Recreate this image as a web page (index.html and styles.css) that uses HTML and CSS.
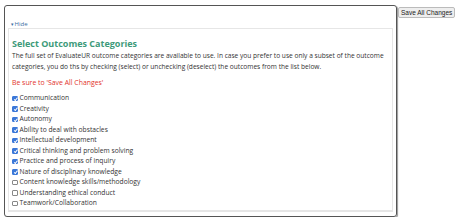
FILE: index.html
```html
<!DOCTYPE html>
<html lang="en">
<head>
    <meta charset="UTF-8">
    <title>Select Outcomes Categories</title>
    <link rel="stylesheet" href="styles.css">
</head>
<body>
    <div class="page">
        <div class="panel">
            <div class="toggle"><a href="#"><span class="arrow">&#9662;</span>Hide</a></div>
            <div class="inner">
                <h2>Select Outcomes Categories</h2>
                <p class="intro">The full set of EvaluateUR outcome categories are available to use. In case you prefer to use only a subset of the outcome categories, you do ths by checking (select) or unchecking (deselect) the outcomes from the list below.</p>
                <p class="warn">Be sure to 'Save All Changes'</p>
                <ul class="outcomes">
                    <li><label><input type="checkbox" checked> Communication</label></li>
                    <li><label><input type="checkbox" checked> Creativity</label></li>
                    <li><label><input type="checkbox" checked> Autonomy</label></li>
                    <li><label><input type="checkbox" checked> Ability to deal with obstacles</label></li>
                    <li><label><input type="checkbox" checked> Intellectual development</label></li>
                    <li><label><input type="checkbox" checked> Critical thinking and problem solving</label></li>
                    <li><label><input type="checkbox" checked> Practice and process of inquiry</label></li>
                    <li><label><input type="checkbox" checked> Nature of disciplinary knowledge</label></li>
                    <li><label><input type="checkbox"> Content knowledge skills/methodology</label></li>
                    <li><label><input type="checkbox"> Understanding ethical conduct</label></li>
                    <li><label><input type="checkbox"> Teamwork/Collaboration</label></li>
                </ul>
            </div>
        </div>
        <button class="save">Save All Changes</button>
    </div>
</body>
</html>
```

FILE: styles.css
```css
body {
    margin: 0;
    background: #fff;
    font-family: "Open Sans", "DejaVu Sans", sans-serif;
    color: #333;
}
.page {
    display: flex;
    align-items: flex-start;
    padding: 5px 0 0 4px;
}
.panel {
    width: 385px;
    padding: 0 3px 4px 3px;
    border: 1px solid #555;
    border-radius: 3px;
    box-shadow: 1px 1px 1px #999;
}
.toggle {
    padding: 14px 0 0 3px;
    font-size: 6px;
    line-height: 8px;
}
.toggle a {
    color: #3a6da3;
    text-decoration: none;
}
.arrow {
    font-size: 5px;
    margin-right: 1px;
}
.inner {
    border: 1px solid #e6e6e6;
    border-bottom-width: 2px;
    padding: 9px 0 1px 3px;
}
h2 {
    margin: 0;
    font-size: 9px;
    line-height: 12px;
    font-weight: bold;
    color: #3d9a7a;
}
.intro {
    margin: 0;
    font-size: 6.6px;
    line-height: 11px;
}
.warn {
    margin: 5px 0 0 0;
    font-size: 6.9px;
    line-height: 11px;
    color: #e2322c;
}
.outcomes {
    list-style: none;
    margin: 5px 0 0 0;
    padding: 0;
    font-size: 6.7px;
    line-height: 10.5px;
}
.outcomes label {
    display: flex;
    align-items: center;
    gap: 2px;
}
.outcomes input {
    appearance: none;
    width: 5.5px;
    height: 5.5px;
    margin: 0;
    border: 0.5px solid #888;
    border-radius: 1px;
    background: #fff;
    position: relative;
}
.outcomes input:checked {
    background: #3b78d8;
    border-color: #3b78d8;
}
.outcomes input:checked::after {
    content: "";
    position: absolute;
    left: 1.6px;
    top: 0.3px;
    width: 1.2px;
    height: 2.6px;
    border: solid #fff;
    border-width: 0 0.8px 0.8px 0;
    transform: rotate(40deg);
}
.save {
    margin: 2px 0 0 1px;
    padding: 1px 2px;
    font-family: "Liberation Sans", Arial, sans-serif;
    font-size: 6.5px;
    color: #222;
    background: #eee;
    border: 1px solid #bbb;
    border-radius: 2px;
}
```
